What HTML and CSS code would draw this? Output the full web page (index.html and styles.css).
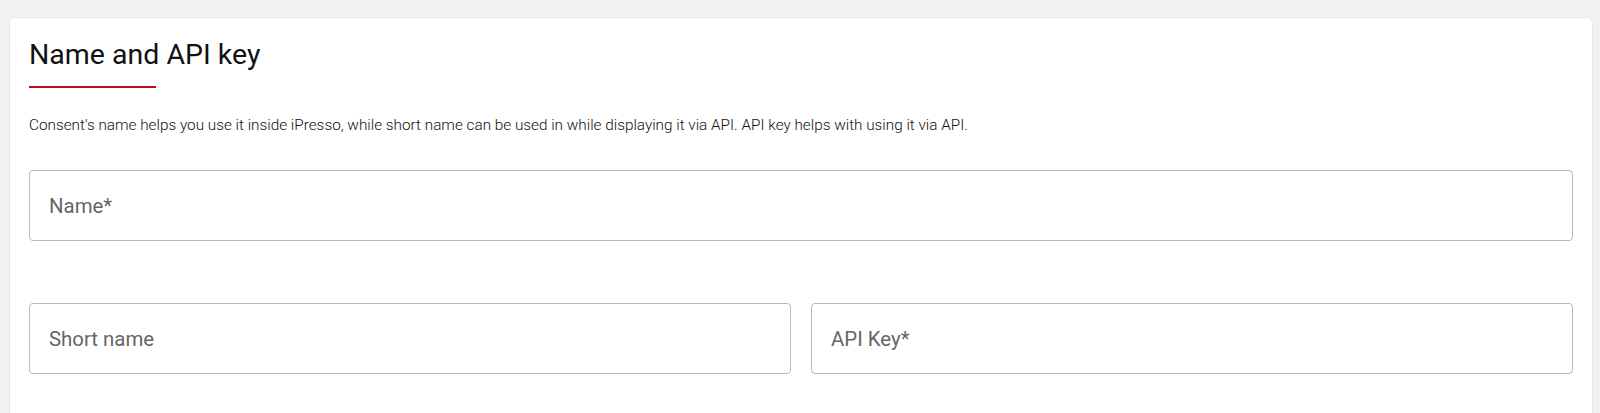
FILE: index.html
```html
<!DOCTYPE html>
<html lang="en">
<head>
  <meta charset="UTF-8">
  <meta name="viewport" content="width=device-width, initial-scale=1.0">
  <title>Name and API key</title>
  <link rel="stylesheet" href="styles.css">
</head>
<body>

  <div class="page">
    <section class="card">
      <h2 class="card-title">Name and API key</h2>
      <p class="card-description">
        Consent's name helps you use it inside iPresso, while short name can be used in while displaying it via API. API key helps with using it via API.
      </p>

      <form class="consent-form">
        <input type="text" class="field" name="name" placeholder="Name*">

        <div class="field-row">
          <input type="text" class="field" name="shortName" placeholder="Short name">
          <input type="text" class="field" name="apiKey" placeholder="API Key*">
        </div>
      </form>
    </section>
  </div>

</body>
</html>
```

FILE: styles.css
```css
body {
  font-family: Roboto, 'Liberation Sans', Arial, sans-serif;
  background-color: #f2f2f2;
  margin: 0;
}

.page {
  padding: 17px 7px 0 9px;
  height: 100vh;
  box-sizing: border-box;
  display: flex;
  flex-direction: column;
}

.card {
  flex: 1;
  background-color: #fff;
  border: 1px solid #e6e6e6;
  border-bottom: none;
  border-radius: 6px 6px 0 0;
  padding: 21px 19px 40px 19px;
}

.card-title {
  margin: 0;
  font-size: 28.5px;
  font-weight: 400;
  line-height: 32px;
  color: #111;
}

.card-title::after {
  content: "";
  display: block;
  width: 127px;
  height: 2px;
  margin-top: 15px;
  background-color: #b70e0e;
}

.card-description {
  margin: 27px 0 0;
  font-size: 15.3px;
  font-weight: 300;
  line-height: 20px;
  color: #111;
}

.consent-form {
  margin-top: 35px;
  display: flex;
  flex-direction: column;
  gap: 62px;
}

.field-row {
  display: flex;
  gap: 20px;
}

.field {
  height: 71px;
  box-sizing: border-box;
  padding: 0 19px;
  border: 1px solid #b8b8b8;
  border-radius: 4px;
  font-family: inherit;
  font-size: 20.4px;
  color: #222;
  background-color: #fff;
}

.field-row .field {
  flex: 1;
  min-width: 0;
}

.field::placeholder {
  color: #666;
}
```
